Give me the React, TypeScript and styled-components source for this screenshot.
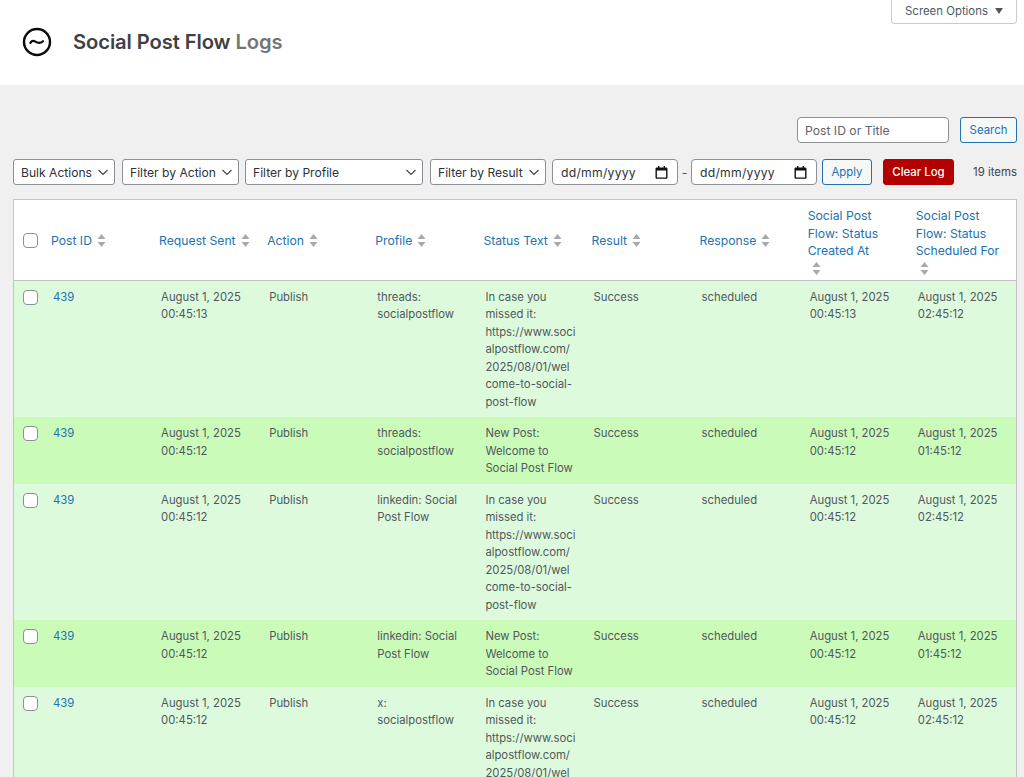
import React from "react";
import styled, { createGlobalStyle } from "styled-components";

const Global = createGlobalStyle`
  html, body { margin: 0; padding: 0; height: 777px; overflow: hidden; background: #f0f0f1; }
  body, input, button { font-family: Inter, "Liberation Sans", sans-serif; }
  * { box-sizing: border-box; }
`;

const Page = styled.div`
  width: 1024px;
  height: 777px;
  overflow: hidden;
`;
const Header = styled.header`
  height: 85px;
  background: #fff;
  display: flex;
  align-items: flex-start;
  justify-content: space-between;
  padding-right: 7px;
`;
const Brand = styled.div`
  display: flex;
  align-items: center;
  gap: 21px;
  padding: 26px 0 0 22px;
`;
const Title = styled.h1`
  margin: 0;
  font-size: 20.2px;
  line-height: 32px;
  font-weight: 600;
  letter-spacing: -0.1px;
  color: #3f4144;
  span { color: #737579; }
`;
const ScreenOptions = styled.button`
  width: 126px;
  height: 24px;
  background: #fff;
  border: 1px solid #c9cbcf;
  border-top: 0;
  border-radius: 0 0 4px 4px;
  font-size: 11.4px;
  color: #50575e;
  display: flex;
  align-items: center;
  justify-content: center;
  gap: 7px;
  padding: 0 0 2px;
  &::after {
    content: "";
    border-left: 4px solid transparent;
    border-right: 4px solid transparent;
    border-top: 6px solid #50575e;
  }
`;
const Content = styled.main`
  padding: 32px 7px 0 13px;
`;
const SearchRow = styled.div`
  display: flex;
  justify-content: flex-end;
  gap: 11px;
  height: 26px;
`;
const SearchInput = styled.input`
  width: 152px;
  height: 26px;
  border: 1px solid #8c8f94;
  border-radius: 4px;
  background: #fff;
  padding: 0 7px;
  font-size: 12.2px;
  &::placeholder { color: #5e6369; opacity: 1; }
`;
const OutlineButton = styled.button<{ $w: number; $ml?: number }>`
  width: ${(p) => p.$w}px;
  margin-left: ${(p) => p.$ml ?? 0}px;
  flex: none;
  height: 26px;
  border: 1px solid #2271b1;
  border-radius: 3px;
  background: #f6f7f7;
  color: #2271b1;
  font-size: 11.4px;
  padding: 0;
`;
const FilterRow = styled.div`
  display: flex;
  align-items: center;
  margin-top: 16px;
  height: 26px;
`;
const Select = styled.div<{ $w: number; $ml?: number }>`
  width: ${(p) => p.$w}px;
  margin-left: ${(p) => p.$ml ?? 0}px;
  height: 26px;
  flex: none;
  border: 1px solid #8c8f94;
  border-radius: 3px;
  background: #fff;
  color: #2c3338;
  font-size: 12.1px;
  display: flex;
  align-items: center;
  justify-content: space-between;
  padding: 0 5px 0 7px;
  svg { flex: none; }
`;
const DateBox = styled.div<{ $ml: number }>`
  width: 126px;
  height: 26px;
  flex: none;
  margin-left: ${(p) => p.$ml}px;
  border: 1px solid #8c8f94;
  border-radius: 4px;
  background: #fff;
  color: #2c3338;
  font-size: 12.2px;
  letter-spacing: 0.25px;
  display: flex;
  align-items: center;
  justify-content: space-between;
  padding: 0 9px 0 8px;
`;
const Dash = styled.span`
  width: 13px;
  margin-right: -13px;
  flex: none;
  text-align: center;
  font-size: 12.2px;
  color: #50575e;
`;
const ClearLog = styled.button`
  width: 71px;
  height: 26px;
  margin-left: 11px;
  flex: none;
  border: 1px solid #b30000;
  border-radius: 3px;
  background: #b30000;
  color: #fff;
  font-size: 11.4px;
  font-weight: 500;
  padding: 0;
`;
const ItemCount = styled.span`
  margin-left: auto;
  font-size: 11.4px;
  color: #3c434a;
`;
const Table = styled.table`
  width: 1004px;
  margin-top: 14px;
  table-layout: fixed;
  border-collapse: separate;
  border-spacing: 0;
  border: 1px solid #c3c4c7;
  border-bottom: 0;
  background: #fff;
  font-size: 11.3px;
  line-height: 17.48px;
  color: #50575e;
`;
const CheckCol = styled.col`
  width: 37px;
`;
const DataCol = styled.col`
  width: 108.1px;
`;
const HeadCell = styled.th`
  height: 81px;
  padding: 2px 14px 0 0;
  text-align: left;
  vertical-align: middle;
  font-weight: 400;
  font-size: 12.2px;
  border-bottom: 1px solid #c3c4c7;
  a { color: #2271b1; text-decoration: none; }
`;
const SortIcon = styled.svg<{ $block?: boolean }>`
  width: 9px;
  height: 13px;
  margin-left: 5px;
  vertical-align: -2px;
  display: ${(p) => (p.$block ? "block" : "inline-block")};
  ${(p) => p.$block && "margin: 2px 0 0 4px;"}
`;
const CheckHead = styled.th`
  padding: 0 0 0 9px;
  text-align: left;
  border-bottom: 1px solid #c3c4c7;
  font-weight: 400;
`;
const Box = styled.input.attrs({ type: "checkbox" })`
  appearance: none;
  display: block;
  margin: 0;
  width: 15px;
  height: 15px;
  background: #fff;
  border: 1px solid #8c8f94;
  border-radius: 4px;
`;
const Row = styled.tr<{ $strong: boolean }>`
  background: ${(p) => (p.$strong ? "#cbfbb9" : "#ddfbdc")};
`;
const CheckCell = styled.td`
  padding: 9px 0 0 9px;
  vertical-align: top;
`;
const Cell = styled.td`
  padding: 8px 8px 6px 2px;
  vertical-align: top;
  white-space: pre-line;
  a { color: #2271b1; text-decoration: none; }
`;

const Chevron = () => (
  <svg width="12" height="12" viewBox="0 0 12 12" fill="none" stroke="#3c434a" strokeWidth="1.1">
    <path d="M1.5 4 6 8.5 10.5 4" />
  </svg>
);
const Calendar = () => (
  <svg width="13" height="13" viewBox="0 0 13 13">
    <path fillRule="evenodd" fill="#111" d="M3 0h1.4v1.4h4.2V0H10v1.4h1.2c.7 0 1.3.6 1.3 1.3v8.8c0 .7-.6 1.3-1.3 1.3H1.8c-.7 0-1.3-.6-1.3-1.3V2.7c0-.7.6-1.3 1.3-1.3H3V0zM1.9 4.6v6.9h9.2V4.6H1.9z" />
  </svg>
);
const Sort = ({ block }: { block?: boolean }) => (
  <SortIcon $block={block} viewBox="0 0 9 13">
    <path fill="#a7aaad" d="M4.5 0 8.5 5h-8zM.5 8h8l-4 5z" />
  </SortIcon>
);

const Logo = () => (
  <svg width="30" height="30" viewBox="0 0 30 30" fill="none" stroke="#0b0b0b">
    <circle cx="15" cy="15" r="13" strokeWidth="2.4" />
    <path d="M8.4 15.8c1.3-2 3-2.4 5-1.2 2.6 1.7 5 1.9 7.6-.4" strokeWidth="2.2" strokeLinecap="round" />
  </svg>
);

const heads = ["Post ID", "Request Sent", "Action", "Profile", "Status Text", "Result", "Response"];
const longText = "In case you\nmissed it:\nhttps://www.soci\nalpostflow.com/\n2025/08/01/wel\ncome-to-social-\npost-flow";
const shortText = "New Post:\nWelcome to\nSocial Post Flow";
const rows = [
  { sent: "00:45:13", profile: "threads:\nsocialpostflow", text: longText, sched: "02:45:12", strong: false },
  { sent: "00:45:12", profile: "threads:\nsocialpostflow", text: shortText, sched: "01:45:12", strong: true },
  { sent: "00:45:12", profile: "linkedin: Social\nPost Flow", text: longText, sched: "02:45:12", strong: false },
  { sent: "00:45:12", profile: "linkedin: Social\nPost Flow", text: shortText, sched: "01:45:12", strong: true },
  { sent: "00:45:12", profile: "x:\nsocialpostflow", text: longText, sched: "02:45:12", strong: false },
];

export default function App() {
  return (
    <Page>
      <Global />
      <Header>
        <Brand>
          <Logo />
          <Title>Social Post Flow <span>Logs</span></Title>
        </Brand>
        <ScreenOptions>Screen Options</ScreenOptions>
      </Header>
      <Content>
        <SearchRow>
          <SearchInput placeholder="Post ID or Title" />
          <OutlineButton $w={57}>Search</OutlineButton>
        </SearchRow>
        <FilterRow>
          <Select $w={102}>Bulk Actions <Chevron /></Select>
          <Select $w={117} $ml={7}>Filter by Action <Chevron /></Select>
          <Select $w={178} $ml={6}>Filter by Profile <Chevron /></Select>
          <Select $w={116} $ml={7}>Filter by Result <Chevron /></Select>
          <DateBox $ml={6}>dd/mm/yyyy <Calendar /></DateBox>
          <Dash>-</Dash>
          <DateBox $ml={13}>dd/mm/yyyy <Calendar /></DateBox>
          <OutlineButton $w={50} $ml={5}>Apply</OutlineButton>
          <ClearLog>Clear Log</ClearLog>
          <ItemCount>19 items</ItemCount>
        </FilterRow>
        <Table>
          <colgroup>
            <CheckCol />
            {Array.from({ length: 8 }, (_, i) => <DataCol key={i} />)}
            <col />
          </colgroup>
          <thead>
            <tr>
              <CheckHead><Box /></CheckHead>
              {heads.map((h) => (
                <HeadCell key={h}><a href="#">{h}</a><Sort /></HeadCell>
              ))}
              <HeadCell><a href="#">Social Post Flow: Status Created At</a><Sort block /></HeadCell>
              <HeadCell><a href="#">Social Post Flow: Status Scheduled For</a><Sort block /></HeadCell>
            </tr>
          </thead>
          <tbody>
            {rows.map((r, i) => (
              <Row key={i} $strong={r.strong}>
                <CheckCell><Box /></CheckCell>
                <Cell><a href="#">439</a></Cell>
                <Cell>{`August 1, 2025\n${r.sent}`}</Cell>
                <Cell>Publish</Cell>
                <Cell>{r.profile}</Cell>
                <Cell>{r.text}</Cell>
                <Cell>Success</Cell>
                <Cell>scheduled</Cell>
                <Cell>{`August 1, 2025\n${r.sent}`}</Cell>
                <Cell>{`August 1, 2025\n${r.sched}`}</Cell>
              </Row>
            ))}
          </tbody>
        </Table>
      </Content>
    </Page>
  );
}
